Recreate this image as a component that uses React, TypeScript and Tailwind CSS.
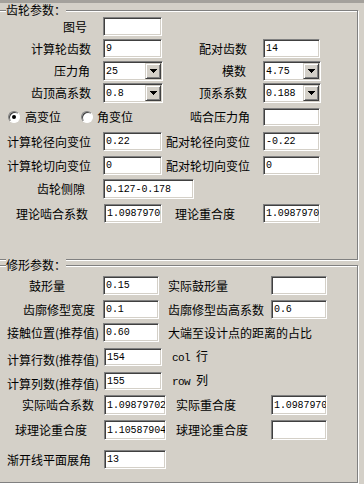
import React from "react";

const cjk = "font-['Noto_Sans_CJK_SC',sans-serif]";
const mono = "font-['Liberation_Mono',monospace] text-[10px] tracking-[-0.1px]";
const sunken =
  "border border-t-[#808080] border-l-[#808080] border-r-white border-b-white shadow-[inset_1px_1px_0_#404040,inset_-1px_-1px_0_#d4d0c8]";
const raised =
  "border border-t-[#d4d0c8] border-l-[#d4d0c8] border-r-[#404040] border-b-[#404040] shadow-[inset_1px_1px_0_#fff,inset_-1px_-1px_0_#808080]";
const etched = "border border-[#808080] shadow-[inset_1px_1px_0_#fff,1px_1px_0_#fff]";

function Edit({ className, value }: { className: string; value?: string }) {
  return (
    <div
      className={`shrink-0 h-full bg-white ${sunken} ${className} flex items-center pl-[2px] pt-[1px] overflow-hidden whitespace-nowrap text-black ${mono}`}
    >
      {value}
    </div>
  );
}

function Combo({ className, value }: { className: string; value: string }) {
  return (
    <div className={`shrink-0 h-full bg-white ${sunken} ${className} flex p-[1px]`}>
      <span className={`flex-1 flex items-center pl-[1px] pt-[1px] text-black ${mono}`}>{value}</span>
      <span className={`w-[16px] h-full bg-[#d4d0c8] ${raised} flex items-center justify-center`}>
        <svg width="7" height="4" shapeRendering="crispEdges">
          <path d="M0 0h7v1H0zM1 1h5v1H1zM2 2h3v1H2zM3 3h1v1H3z" fill="#000" />
        </svg>
      </span>
    </div>
  );
}

function Radio({ checked }: { checked?: boolean }) {
  return (
    <span className="shrink-0 w-[12px] h-[12px] rounded-full bg-white border border-t-[#808080] border-l-[#808080] border-r-white border-b-white shadow-[inset_1px_1px_0_#404040] flex items-center justify-center">
      {checked && <span className="w-[4px] h-[4px] rounded-full bg-black" />}
    </span>
  );
}

function Legend({ children }: { children: React.ReactNode }) {
  return (
    <span className="absolute top-[-7px] left-[7px] bg-[#d4d0c8] leading-[12px] whitespace-nowrap">
      {children}
    </span>
  );
}

export default function App() {
  return (
    <div className={`w-[364px] h-[484px] overflow-hidden bg-[#d4d0c8] text-[12px] leading-[12px] text-black ${cjk}`}>
      <div className="h-[3px] bg-[#a4a19c]" />

      {/* 齿轮参数 */}
      <section className={`relative -ml-[2px] mt-[7px] w-[360px] h-[250px] ${etched}`}>
        <Legend>齿轮参数：</Legend>

        <div className="flex items-center h-[19px] mt-[6px]">
          <span className="shrink-0 w-[104px] pl-[64px]">图号</span>
          <Edit className="w-[59px]" />
        </div>

        <div className="flex items-center h-[19px] mt-[3px] whitespace-nowrap">
          <span className="shrink-0 w-[104px] pl-[32px]">计算轮齿数</span>
          <Edit className="w-[59px]" value="9" />
          <span className="shrink-0 w-[101px] pl-[37px]">配对齿数</span>
          <Edit className="w-[57px]" value="14" />
        </div>

        <div className="flex items-center h-[20px] mt-[3px] whitespace-nowrap">
          <span className="shrink-0 w-[104px] pl-[55px]">压力角</span>
          <Combo className="w-[60px]" value="25" />
          <span className="shrink-0 w-[100px] pl-[59px]">模数</span>
          <Combo className="w-[58px]" value="4.75" />
        </div>

        <div className="flex items-center h-[20px] mt-[2px] whitespace-nowrap">
          <span className="shrink-0 w-[104px] pl-[32px]">齿顶高系数</span>
          <Combo className="w-[60px]" value="0.8" />
          <span className="shrink-0 w-[100px] pl-[36px]">顶系系数</span>
          <Combo className="w-[58px]" value="0.188" />
        </div>

        <div className="flex items-center h-[18px] mt-[5px] whitespace-nowrap">
          <div className="shrink-0 w-[164px] pl-[9px] flex items-center">
            <Radio checked />
            <span className="ml-[5px]">高变位</span>
            <span className="ml-[20px]">
              <Radio />
            </span>
            <span className="ml-[4px]">角变位</span>
          </div>
          <span className="shrink-0 w-[100px] pl-[27px]">啮合压力角</span>
          <Edit className="w-[57px]" />
        </div>

        <div className="flex items-center h-[19px] mt-[6px] whitespace-nowrap">
          <span className="shrink-0 w-[104px] pl-[8px]">计算轮径向变位</span>
          <Edit className="w-[59px]" value="0.22" />
          <span className="shrink-0 w-[101px] pl-[4px]">配对轮径向变位</span>
          <Edit className="w-[57px]" value="-0.22" />
        </div>

        <div className="flex items-center h-[19px] mt-[5px] whitespace-nowrap">
          <span className="shrink-0 w-[104px] pl-[8px]">计算轮切向变位</span>
          <Edit className="w-[59px]" value="0" />
          <span className="shrink-0 w-[101px] pl-[4px]">配对轮切向变位</span>
          <Edit className="w-[57px]" value="0" />
        </div>

        <div className="flex items-center h-[20px] mt-[4px] whitespace-nowrap">
          <span className="shrink-0 w-[104px] pl-[38px]">齿轮侧隙</span>
          <Edit className="w-[91px]" value="0.127-0.178" />
        </div>

        <div className="flex items-center h-[19px] mt-[5px] whitespace-nowrap">
          <span className="shrink-0 w-[105px] pl-[17px]">理论啮合系数</span>
          <Edit className="w-[58px]" value="1.0987970" />
          <span className="shrink-0 w-[101px] pl-[13px]">理论重合度</span>
          <Edit className="w-[57px]" value="1.0987970" />
        </div>
      </section>

      {/* 修形参数 */}
      <section className={`relative -ml-[2px] mt-[5px] w-[360px] h-[218px] ${etched}`}>
        <Legend>修形参数：</Legend>

        <div className="flex items-center h-[19px] mt-[10px] whitespace-nowrap">
          <span className="shrink-0 w-[104px] pl-[30px]">鼓形量</span>
          <Edit className="w-[56px]" value="0.15" />
          <span className="shrink-0 w-[112px] pl-[9px]">实际鼓形量</span>
          <Edit className="w-[56px]" />
        </div>

        <div className="flex items-center h-[19px] mt-[5px] whitespace-nowrap">
          <span className="shrink-0 w-[104px] pl-[24px]">齿廓修型宽度</span>
          <Edit className="w-[56px]" value="0.1" />
          <span className="shrink-0 w-[112px] pl-[9px]">齿廓修型齿高系数</span>
          <Edit className="w-[56px]" value="0.6" />
        </div>

        <div className="flex items-center h-[19px] mt-[4px] whitespace-nowrap">
          <span className="shrink-0 w-[104px] pl-[8px]">接触位置(推荐值)</span>
          <Edit className="w-[56px]" value="0.60" />
          <span className="shrink-0 pl-[9px]">大端至设计点的距离的占比</span>
        </div>

        <div className="flex items-center h-[18px] mt-[6px] whitespace-nowrap">
          <span className="shrink-0 w-[105px] pl-[8px] pt-[6px]">计算行数(推荐值)</span>
          <Edit className="w-[58px]" value="154" />
          <span className="shrink-0 pl-[10px]">
            <span className="font-['Liberation_Mono',monospace] text-[11px] tracking-[-0.6px]">col </span>行
          </span>
        </div>

        <div className="flex items-center h-[18px] mt-[6px] whitespace-nowrap">
          <span className="shrink-0 w-[105px] pl-[8px] pt-[6px]">计算列数(推荐值)</span>
          <Edit className="w-[58px]" value="155" />
          <span className="shrink-0 pl-[10px]">
            <span className="font-['Liberation_Mono',monospace] text-[11px] tracking-[-0.6px]">row </span>列
          </span>
        </div>

        <div className="flex items-center h-[20px] mt-[5px] whitespace-nowrap">
          <span className="shrink-0 w-[105px] pl-[23px]">实际啮合系数</span>
          <Edit className="w-[62px]" value="1.09879702" />
          <span className="shrink-0 w-[105px] pl-[10px]">实际重合度</span>
          <Edit className="w-[56px]" value="1.0987970" />
        </div>

        <div className="flex items-center h-[20px] mt-[5px] whitespace-nowrap">
          <span className="shrink-0 w-[105px] pl-[16px]">球理论重合度</span>
          <Edit className="w-[62px]" value="1.10587904" />
          <span className="shrink-0 w-[105px] pl-[10px]">球理论重合度</span>
          <Edit className="w-[56px]" />
        </div>

        <div className="flex items-center h-[19px] mt-[10px] whitespace-nowrap">
          <span className="shrink-0 w-[105px] pl-[8px]">渐开线平面展角</span>
          <Edit className="w-[62px]" value="13" />
        </div>
      </section>
    </div>
  );
}
